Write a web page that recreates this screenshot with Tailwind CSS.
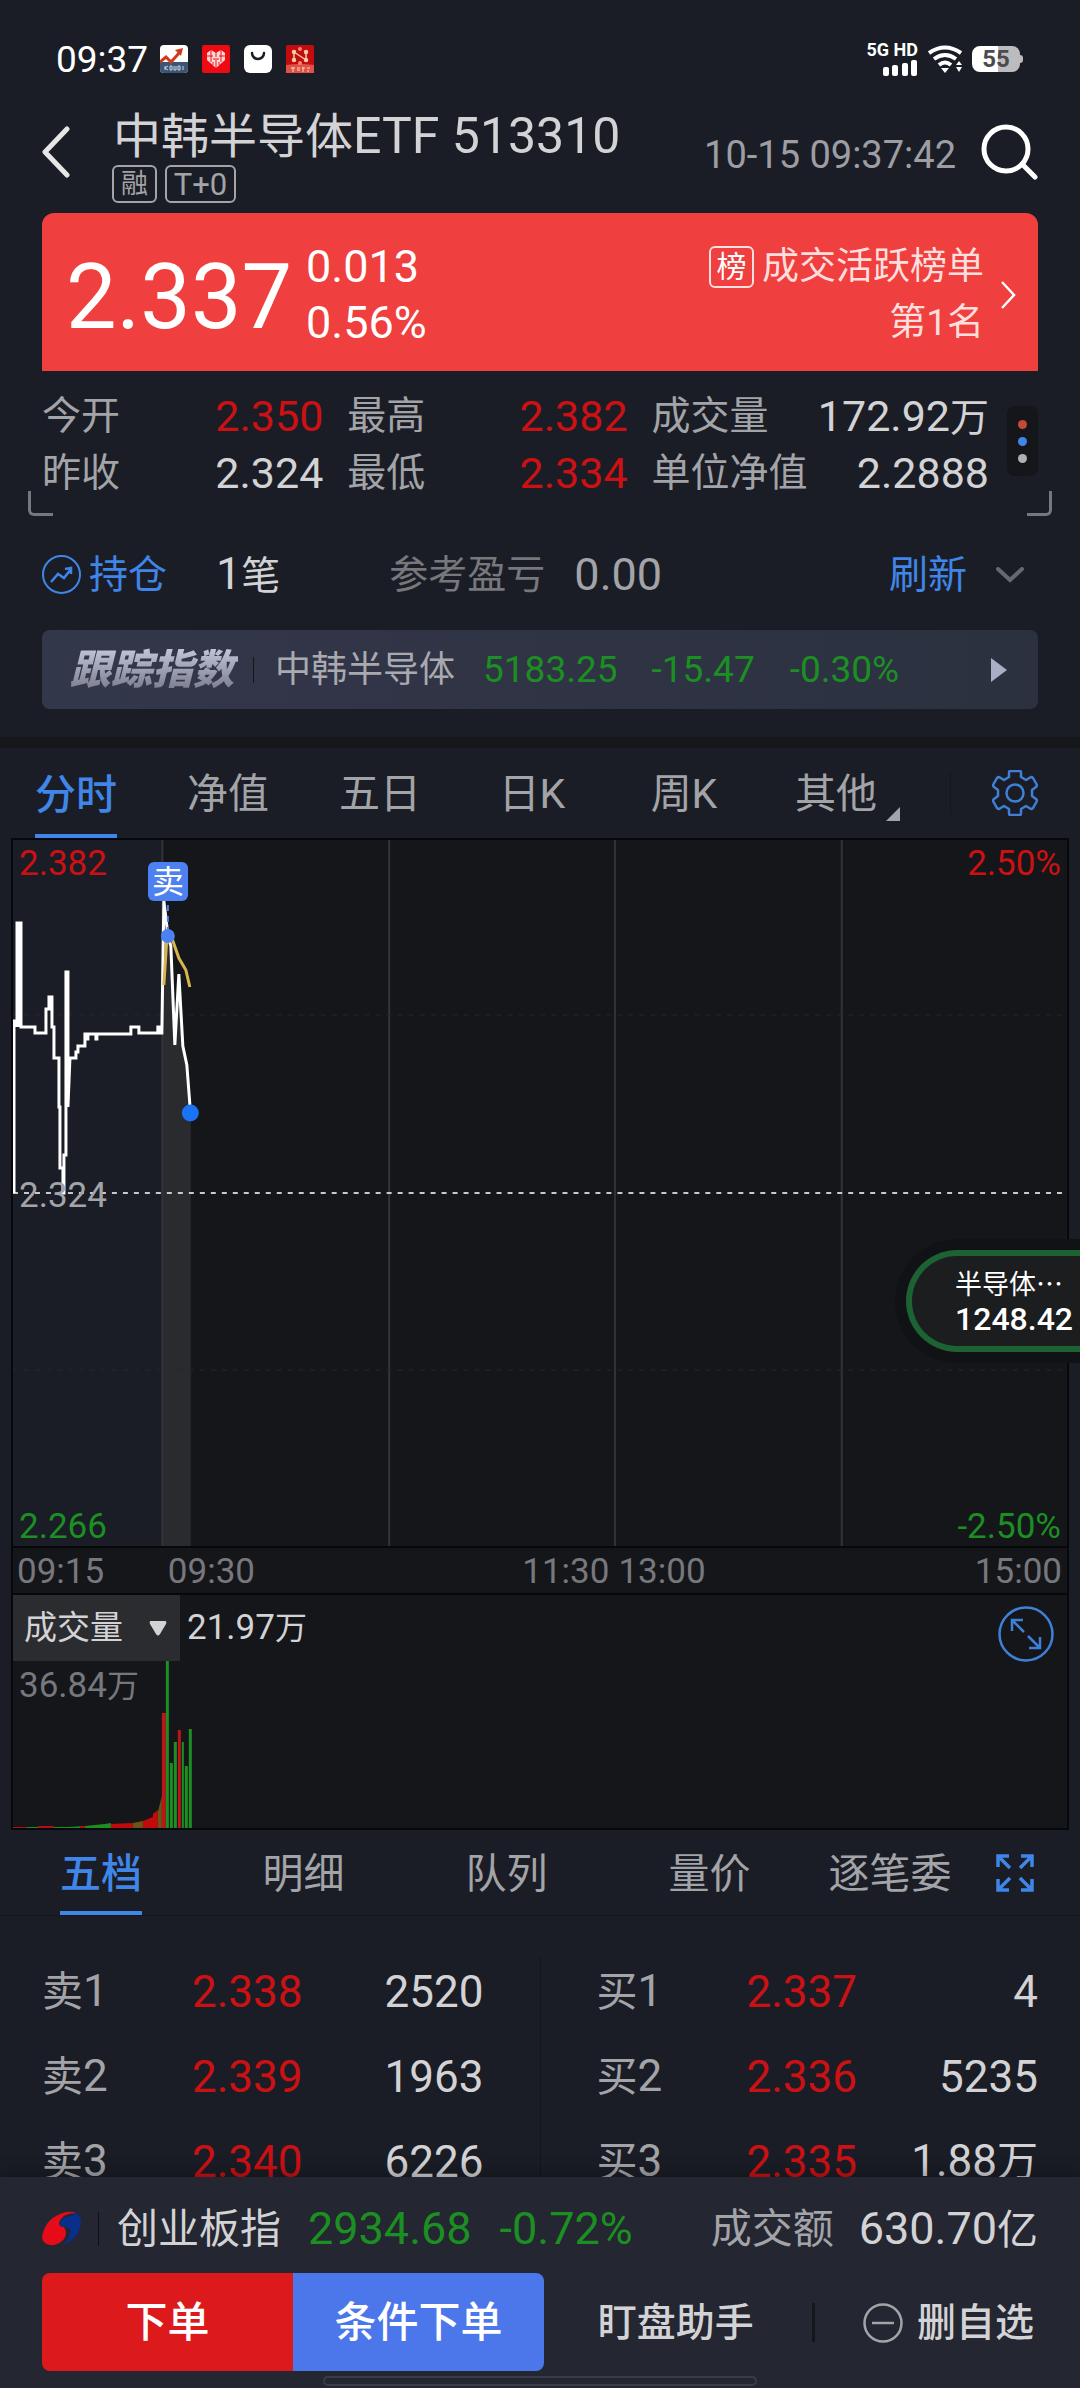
<!DOCTYPE html>
<html lang="zh-CN">
<head>
<meta charset="utf-8">
<meta name="viewport" content="width=device-width, initial-scale=1">
<title>中韩半导体ETF 513310</title>
<script src="https://cdn.jsdelivr.net/npm/@tailwindcss/browser@4"></script>
</head>
<body class="bg-[#1b1d26] font-['Roboto','Noto_Sans_CJK_SC',sans-serif] text-[#d3d3d5]">
<div class="relative flex h-screen flex-col overflow-hidden">

  <!-- Status bar -->
  <div class="flex h-[108px] shrink-0 items-center pt-[10px] pr-[57px] pl-[56px]">
    <span class="text-[37px] leading-none text-white">09:37</span>
    <div class="ml-[12px] flex gap-[14px]">
      <svg class="size-7" viewBox="0 0 28 28"><rect width="28" height="28" rx="4" fill="#fff"/><path d="M0 17h28v7a4 4 0 0 1-4 4H4a4 4 0 0 1-4-4z" fill="#3a5575"/><path d="M0 17l6-5 5 5 9-10" fill="none" stroke="#d03a1c" stroke-width="3"/><path d="M15 5l8-2-2 8z" fill="#d03a1c"/><path d="M5 21v4M5 23l3-2M5 23l3 2M10 21h2v4h-2zM14 21v4h2v-4M18 25v-4h2v4zM23 21v4" fill="none" stroke="#cdd6e0" stroke-width="1"/></svg>
      <svg class="size-7" viewBox="0 0 28 28"><rect width="28" height="28" rx="2" fill="#ee0a12"/><path d="M14 23L5 15V8l4-3 5 3 5-3 4 3v7z" fill="#ffd9d9"/><path d="M9 5v12M14 8v4M19 5v12M5 11h6M17 11h6M11 14h6M11 17v3M17 17v3M14 15v8" stroke="#ee0a12" stroke-width="1" fill="none"/></svg>
      <svg class="size-7" viewBox="0 0 28 28"><rect width="28" height="28" rx="6" fill="#fff"/><path d="M8 8a6 6 0 0 0 12 0" fill="none" stroke="#1b1d26" stroke-width="2.5" stroke-linecap="round"/></svg>
      <svg class="size-7" viewBox="0 0 28 28"><rect width="28" height="28" rx="2" fill="#c20c10"/><path d="M0 20q14-2 28 0v8H0z" fill="#e05248"/><g stroke="#f5c9a0" stroke-width="1.5" fill="#f5c9a0"><path d="M8 8v7M8 7l12 8M20 7v8" fill="none"/><circle cx="8" cy="7" r="1.5"/><circle cx="8" cy="15" r="1.5"/><circle cx="20" cy="7" r="1.5"/><circle cx="20" cy="15" r="1.5"/></g><circle cx="14" cy="4" r="2" fill="#f08a70"/><circle cx="14" cy="18" r="2" fill="#f08a70"/><path d="M5 23h4M7 22v5M11 23h3M11 25h3M16 23h3M17 22v5M21 23h3M22 25v2" stroke="#f7d9b0" stroke-width="1" fill="none"/></svg>
    </div>
    <div class="ml-auto flex items-center gap-[10px]">
      <div class="flex flex-col items-end gap-[3px] text-[18px] leading-[15px] font-bold text-white">
        <span>5G HD</span>
        <svg class="h-4 w-[36px]" viewBox="0 0 36 16" fill="#fff"><rect x="1" y="7" width="6" height="9" rx="2"/><rect x="10" y="5" width="6" height="11" rx="2"/><rect x="20" y="3" width="6" height="13" rx="2"/><rect x="29" y="0" width="6" height="16" rx="2"/></svg>
      </div>
      <svg class="h-7 w-[34px]" viewBox="0 0 34 28" fill="none" stroke="#fff" stroke-width="4"><path d="M1 8Q17-3 33 8"/><path d="M6 14Q17 6 28 14"/><path d="M11 20Q17 15 23 20"/><path d="M13 23h8l-4 5z" fill="#fff" stroke="none"/><path d="M28 20l3-4 3 4zM28 22l3 5 3-5z" fill="#fff" stroke="none"/></svg>
      <div class="flex items-center">
        <div class="flex h-[26px] w-[48px] items-center justify-center rounded-lg bg-linear-to-r from-white from-55% to-[#bcbcbe] to-55% text-2xl leading-none font-bold text-[#4b4b4d]">55</div>
        <span class="h-2 w-[3px] rounded-r-sm bg-[#bcbcbe]"></span>
      </div>
    </div>
  </div>

  <!-- Title bar -->
  <header class="flex h-[105px] shrink-0 items-start px-[42px]">
    <button aria-label="返回" class="mt-[18px]"><svg class="h-[52px] w-7" viewBox="0 0 28 52" fill="none" stroke="#e6e6e6" stroke-width="5" stroke-linecap="round" stroke-linejoin="round"><path d="M25 3L3 26l22 23"/></svg></button>
    <div class="ml-[42px]">
      <h1 class="pl-px text-[48px] leading-[57px] whitespace-nowrap">中韩半导体<span class="text-[50px]">ETF 513310</span></h1>
      <div class="flex gap-2 text-[#a3a4a8]">
        <span class="flex h-[38px] w-[45px] items-center justify-center rounded-md border-2 text-[27px] leading-none">融</span>
        <span class="flex h-[38px] w-[71px] items-center justify-center rounded-md border-2 text-[31px] leading-none">T+0</span>
      </div>
    </div>
    <time class="mt-[27px] ml-auto text-[38px] leading-[40px] text-[#9d9ea3]">10-15 09:37:42</time>
    <button aria-label="搜索" class="mt-[14px] ml-6"><svg class="size-[58px]" viewBox="0 0 58 58" fill="none" stroke="#fff" stroke-width="5" stroke-linecap="round"><circle cx="26" cy="27" r="22"/><path d="M43 43l12 12"/></svg></button>
  </header>

  <!-- Price card -->
  <section class="mx-[42px] flex h-[158px] shrink-0 items-center rounded-t-xl bg-[#ef3f3e] pt-[6px] pr-[22px] pl-6 text-white">
    <span class="pt-[6px] text-[90px] leading-none">2.337</span>
    <div class="ml-[14px] text-[45px] leading-[56px]"><p>0.013</p><p>0.56%</p></div>
    <a href="#rank" class="ml-auto flex items-center gap-4 text-right text-[37px] leading-[56px] text-[#ffdedd]">
      <span>
        <span class="flex items-center gap-2"><span class="flex h-[42px] w-[45px] items-center justify-center rounded-md border-2 border-[#ffdedd] text-[30px] leading-none text-white">榜</span>成交活跃榜单</span>
        <span class="block">第1名</span>
      </span>
      <svg class="h-[30px] w-4" viewBox="0 0 16 30" fill="none" stroke="#fff" stroke-width="2.5"><path d="M2 2l12 13L2 28"/></svg>
    </a>
  </section>

  <!-- Key figures -->
  <section class="relative flex h-[149px] shrink-0 items-start px-[42px] pt-[18px]">
    <dl class="grid flex-1 grid-cols-[281fr_280fr_337fr] gap-x-6 text-[43px] leading-[55px]">
      <div class="flex justify-between"><dt class="text-[39px] text-[#a3a4a8]">今开</dt><dd class="text-[#cc1114]">2.350</dd></div>
      <div class="flex justify-between"><dt class="text-[39px] text-[#a3a4a8]">最高</dt><dd class="text-[#cc1114]">2.382</dd></div>
      <div class="flex justify-between"><dt class="text-[39px] text-[#a3a4a8]">成交量</dt><dd>172.92<span class="text-[39px]">万</span></dd></div>
      <div class="flex justify-between"><dt class="text-[39px] text-[#a3a4a8]">昨收</dt><dd>2.324</dd></div>
      <div class="flex justify-between"><dt class="text-[39px] text-[#a3a4a8]">最低</dt><dd class="text-[#cc1114]">2.334</dd></div>
      <div class="flex justify-between"><dt class="text-[39px] text-[#a3a4a8]">单位净值</dt><dd>2.2888</dd></div>
    </dl>
    <button aria-label="更多指标" class="mt-[17px] ml-[18px] flex h-[70px] w-[31px] flex-col items-center justify-center gap-2 rounded-lg bg-[#15161a]">
      <span class="size-[9px] rounded-full bg-[#c44a36]"></span><span class="size-[9px] rounded-full bg-[#3f86e8]"></span><span class="size-[9px] rounded-full bg-[#b0b0b2]"></span>
    </button>
    <span class="absolute bottom-1 left-[28px] size-[25px] rounded-bl-md border-b-3 border-l-3 border-[#77787d]"></span>
    <span class="absolute right-[28px] bottom-1 size-[25px] rounded-br-md border-r-3 border-b-3 border-[#77787d]"></span>
  </section>

  <!-- Holdings -->
  <section class="flex h-[109px] shrink-0 items-center pr-[56px] pl-[42px] text-[39px] leading-[56px]">
    <a href="#position" class="flex items-center gap-2 text-[#3f86e8]">
      <svg class="size-[39px]" viewBox="0 0 39 39" fill="none" stroke="#3f86e8" stroke-width="2"><circle cx="19.500" cy="19.500" r="18.500"/><path d="M9 27l7-8 6 4 7-9M23 14l6-1v6" stroke-width="2.500"/></svg>持仓</a>
    <span class="ml-[49px]"><span class="text-[45px]">1</span>笔</span>
    <span class="ml-[109px] text-[#77787d]">参考盈亏</span>
    <span class="ml-[29px] text-[45px] text-[#a3a4a8]">0.00</span>
    <button class="ml-auto text-[#3f86e8]">刷新</button>
    <button aria-label="展开" class="ml-[29px]"><svg class="h-4 w-7" viewBox="0 0 28 16" fill="none" stroke="#67686d" stroke-width="4" stroke-linecap="round"><path d="M2 2l12 11L26 2"/></svg></button>
  </section>

  <!-- Tracked index -->
  <a href="#index" class="mx-[42px] mt-px flex h-[79px] shrink-0 items-center rounded-lg bg-linear-to-r from-[#33374a] to-[#2c3140] pr-[31px] pl-[28px] text-[37px] leading-none text-[#1c8f22]">
    <span class="bg-linear-to-b from-[#c5c7dc] to-[#77798a] bg-clip-text pr-1 text-[41px] leading-[46px] font-black text-transparent italic">跟踪指数</span>
    <span class="ml-[15px] h-[26px] w-px bg-[#15161a]"></span>
    <span class="ml-[21px] text-[36px] text-[#a9aaaf]">中韩半导体</span>
    <span class="ml-[28px]">5183.25</span>
    <span class="ml-[34px]">-15.47</span>
    <span class="ml-[35px]">-0.30%</span>
    <svg class="ml-auto h-[26px] w-[17px]" viewBox="0 0 17 26" fill="#a9afc4"><path d="M1 1l16 12L1 25z"/></svg>
  </a>
  <div class="mt-7 h-[11px] shrink-0 bg-[#15171b]"></div>

  <!-- Chart tabs -->
  <nav class="flex h-[90px] shrink-0 items-stretch pr-[42px] text-[41px] leading-[46px] text-[#a3a4a8]">
    <div class="grid flex-1 grid-cols-6 pr-1">
      <button class="flex justify-center font-medium text-[#3f86e8]"><span class="h-full border-b-4 border-[#3f86e8] pt-[24px]">分时</span></button>
      <button class="pt-[2px]">净值</button>
      <button class="pt-[2px]">五日</button>
      <button class="pt-[2px]">日K</button>
      <button class="pt-[2px]">周K</button>
      <button class="relative pt-[2px]">其他<svg class="absolute right-[12px] bottom-[17px] size-[14px]" viewBox="0 0 14 14" fill="#a3a4a8"><path d="M14 0v14H0z"/></svg></button>
    </div>
    <span class="ml-[34px] h-[42px] w-px self-center bg-[#15161a]"></span>
    <button aria-label="设置" class="ml-[41px]"><svg class="size-[46px]" viewBox="0 0 46 46" fill="none" stroke="#3f7fd6" stroke-width="2.500" stroke-linejoin="round"><circle cx="23" cy="23" r="8.500"/><path d="M18 1h10q1 0 1 2v4l5 3 5-3q1 0 2 1l4 7q0 1-1 2l-4 3v6l4 3q1 1 1 2l-4 7q-1 1-2 1l-5-3-5 3v4q0 2-1 2H18q-1 0-1-2v-4l-5-3-5 3q-1 0-2-1l-4-7q0-1 1-2l4-3v-6l-4-3q-1-1-1-2l4-7q1-1 2-1l5 3 5-3V3q0-2 1-2z"/></svg></button>
  </nav>

  <!-- Intraday chart -->
  <section class="relative mr-[11px] ml-[11px] shrink-0 border-2 border-[#07080b] bg-[#15161a] text-[35px] leading-[40px]">
    <div class="relative h-[706px]">
      <svg class="absolute inset-0 size-full" viewBox="13 839 1055 706" preserveAspectRatio="none" fill="none">
        <rect x="13" y="839" width="149" height="706" fill="#1b1d26"/>
        <path d="M163 1545V900l4 25 4 20 4 99 4-71 4 72 4 19 4 48v433z" fill="#2a2b2f"/>
        <path d="M162.500 839v706M389.500 839v706M615.500 839v706M842.500 839v706" stroke="#33343b" stroke-width="2"/>
        <path d="M13 1014h1055M13 1369h1055" stroke="#24262b" stroke-dasharray="5 6"/>
        <path d="M13 1192h1055" stroke="#c9c9cb" stroke-width="2" stroke-dasharray="5 6"/>
        <path d="M17 1026V922h4v104z" fill="#fff"/>
        <path d="M14 1192V1020h3v6V922h4v104h14v6h11v-24h3v-12h3v30h2v31h5v49h1v61h3v25h1v-38h2V971h2v135l2-49h6v-6h2v-6h7v-12h2v5h1v-5h8v5h1v-5h34v-7h8v6h19v-6h3v6h1l2-132 3 25 1 10 3 10 4 99 4-71 4 72 4 19 3 39v9" stroke="#fff" stroke-width="3"/>
        <path d="M164 984l3-47h5l7 20 7 12 4 17" stroke="#d9b54e" stroke-width="3"/>
        <path d="M168 904v24" stroke="#4d80f0" stroke-width="2" stroke-dasharray="6 5"/>
        <circle cx="168" cy="935" r="7" fill="#4d80f0"/><circle cx="190.500" cy="1112" r="8.500" fill="#1a72f5"/>
      </svg>
      <span class="absolute top-[22px] left-[135px] flex h-[39px] w-[40px] items-center justify-center rounded-md bg-[#4d80f0] text-[32px] leading-none text-white">卖</span>
      <span class="absolute top-1 left-[6px] text-[#cc1114]">2.382</span>
      <span class="absolute top-1 right-[6px] text-[#cc1114]">2.50%</span>
      <span class="absolute top-[336px] left-[6px] text-[#a3a4a8]">2.324</span>
      <span class="absolute -bottom-px left-[6px] text-[#1c8f22]">2.266</span>
      <span class="absolute right-[6px] -bottom-px text-[#1c8f22]">-2.50%</span>
    </div>
    <div class="grid h-[49px] grid-cols-[148fr_454fr_453fr] items-center border-y-2 border-[#07080b] pt-[3px] text-[#77787d]">
      <span class="pl-1">09:15</span>
      <span class="flex justify-between pr-[5px] pl-[7px]"><span>09:30</span><span>11:30</span></span>
      <span class="flex justify-between pr-[5px] pl-[4px]"><span>13:00</span><span>15:00</span></span>
    </div>
    <div class="relative h-[233px]">
      <svg class="absolute inset-0 size-full" viewBox="13 1594 1055 233" preserveAspectRatio="none">
        <path d="M13 1827v-1h55l17-1 20-2 6-1v5z" fill="#1c8f22"/><path d="M13 1826h14v1H13zM38 1825h16v2H38zM80 1825h5v2h-5z" fill="#b01012"/>
        <path d="M111 1827v-4l22-1v5zM143 1827v-7l10-4v-3l5-4v18z" fill="#c00a0c"/>
        <path d="M133 1827v-5l10-2v7zM158 1827v-16l4-16v32z" fill="#6b5516"/>
        <path d="M162 1712h4v115h-4zM178 1729h3v98h-3z" fill="#bd1517"/>
        <path d="M166 1660h3v167h-3zM170 1762h3v65h-3zM174 1741h3v86h-3zM182 1741h2v86h-2zM185 1765h3v62h-3zM189 1728h3v99h-3z" fill="#1c8f22"/>
      </svg>
      <div class="relative flex h-[66px] items-center">
        <label class="relative flex h-full w-[167px] items-center bg-[#2b2c30]">
          <select aria-label="指标" class="size-full appearance-none pl-[11px] text-[33px] leading-[40px] outline-none"><option>成交量</option></select>
          <svg class="pointer-events-none absolute right-[13px] h-[15px] w-[18px]" viewBox="0 0 18 15" fill="#d3d3d5"><path d="M2 0h14q2 0 1 3l-6 10q-2 3-4 0L1 3Q0 0 2 0z"/></svg>
        </label>
        <span class="ml-[7px] text-[#d3d3d5]">21.97<span class="text-[32px]">万</span></span>
        <button aria-label="放大" class="mt-3 mr-[13px] ml-auto"><svg class="size-[56px]" viewBox="0 0 56 56" fill="none" stroke="#3f7fd6" stroke-width="2.500"><circle cx="28" cy="28" r="26.500"/><path d="M26 26L14 14M14 25V14h11M30 30l12 12M42 31v11H31"/></svg></button>
      </div>
      <span class="relative block pt-[5px] pl-[6px] text-[#77787d]">36.84<span class="text-[32px]">万</span></span>
    </div>
  </section>

  <!-- Floating index ball -->
  <a href="#float" class="absolute top-[1239px] right-0 h-[124px] w-[185px] rounded-l-full bg-[#101215] py-[11px] pl-[11px]">
    <span class="block size-full rounded-l-full border-6 border-r-0 border-[#1d6232] bg-[#1b1d1f] pt-[10px] pl-[43px] whitespace-nowrap text-white">
      <span class="block text-[27px] leading-[34px]">半导体<span class="font-['Noto_Sans_CJK_SC']">⋯</span></span>
      <span class="block text-[32px] leading-[34px] font-medium">1248.42</span>
    </span>
  </a>

  <!-- Order book tabs -->
  <nav class="flex h-[86px] shrink-0 items-stretch border-b border-[#15161a] text-[41px] leading-[46px] text-[#a3a4a8]">
    <div class="flex w-[950px] overflow-hidden whitespace-nowrap">
      <button class="flex w-[202px] shrink-0 justify-center font-medium text-[#3f86e8]"><span class="h-full border-b-4 border-[#3f86e8] pt-[21px]">五档</span></button>
      <button class="w-[203px] shrink-0 pt-[2px]">明细</button>
      <button class="w-[203px] shrink-0 pt-[2px]">队列</button>
      <button class="w-[203px] shrink-0 pt-[2px]">量价</button>
      <button class="w-[199px] shrink-0 pt-[2px]">逐笔委托</button>
    </div>
    <button aria-label="全屏" class="ml-[46px]"><svg class="size-[38px]" viewBox="0 0 38 38" fill="none" stroke="#3f86e8" stroke-width="3.500"><path d="M2 13V2h11M2 2l12 12M25 2h11v11M36 2L24 14M2 25v11h11M2 36l12-12M36 25v11H25M36 36L24 24"/></svg></button>
  </nav>

  <!-- Order book -->
  <section class="flex min-h-0 flex-1 items-start overflow-hidden px-[42px] pt-[33px] text-[44px] leading-[50px]">
    <table class="flex-1 table-fixed">
      <tbody>
        <tr class="h-[85px]"><th scope="row" class="w-[25%] text-left font-normal text-[#a3a4a8]"><span class="text-[41px]">卖</span>1</th><td class="w-[34%] text-right text-[#cc1114]">2.338</td><td class="text-right">2520</td></tr>
        <tr class="h-[85px]"><th scope="row" class="text-left font-normal text-[#a3a4a8]"><span class="text-[41px]">卖</span>2</th><td class="text-right text-[#cc1114]">2.339</td><td class="text-right">1963</td></tr>
        <tr class="h-[85px]"><th scope="row" class="text-left font-normal text-[#a3a4a8]"><span class="text-[41px]">卖</span>3</th><td class="text-right text-[#cc1114]">2.340</td><td class="text-right">6226</td></tr>
      </tbody>
    </table>
    <div class="mt-[7px] mr-[56px] ml-[56px] h-[300px] w-px bg-[#15161a]"></div>
    <table class="flex-1 table-fixed">
      <tbody>
        <tr class="h-[85px]"><th scope="row" class="w-[25%] text-left font-normal text-[#a3a4a8]"><span class="text-[41px]">买</span>1</th><td class="w-[34%] text-right text-[#cc1114]">2.337</td><td class="text-right">4</td></tr>
        <tr class="h-[85px]"><th scope="row" class="text-left font-normal text-[#a3a4a8]"><span class="text-[41px]">买</span>2</th><td class="text-right text-[#cc1114]">2.336</td><td class="text-right">5235</td></tr>
        <tr class="h-[85px]"><th scope="row" class="text-left font-normal text-[#a3a4a8]"><span class="text-[41px]">买</span>3</th><td class="text-right text-[#cc1114]">2.335</td><td class="text-right">1.88<span class="text-[41px]">万</span></td></tr>
      </tbody>
    </table>
  </section>

  <!-- Bottom bar -->
  <footer class="relative flex h-[211px] shrink-0 flex-col bg-[#242631] px-[42px] shadow-[0_-4px_16px_#0000004d]">
    <a href="#chinext" class="flex h-24 items-center pt-[8px] text-[41px] leading-[50px]">
      <svg class="h-9 w-[39px]" viewBox="0 0 39 36"><path d="M28 1q11 0 11 9 0 16-18 24 8-9 7-15-2-4-8-3-4-1-2-5 4-7 14-6z" fill="#0a2f8a"/><path d="M34 2Q20 2 17 12q0 4 5 4 4 6 0 12-6 7-14 6-8-1-8-9Q4 6 24 1q6-1 10 1z" fill="#e60b18"/></svg>
      <span class="ml-[17px] h-[34px] w-px bg-[#0f1014]"></span>
      <span class="ml-[18px]">创业板指</span>
      <span class="ml-[27px] text-[45px] text-[#1c8f22]">2934.68</span>
      <span class="ml-[28px] text-[45px] text-[#1c8f22]">-0.72%</span>
      <span class="ml-auto text-[#a3a4a8]">成交额</span>
      <span class="ml-[25px] text-[45px]">630.70<span class="text-[41px]">亿</span></span>
    </a>
    <div class="flex h-[98px] items-center text-[42px] leading-[50px] font-medium text-white">
      <button class="h-full flex-[253] rounded-l-lg bg-[#dc1a1b] pt-[2px]">下单</button>
      <button class="h-full flex-[253] rounded-r-lg bg-[#4b77ea] pt-[2px]">条件下单</button>
      <button class="flex-[266] pt-[2px] pr-1 text-[39px] text-[#d3d3d5]">盯盘助手</button>
      <span class="h-[39px] w-[3px] bg-[#15161a]"></span>
      <button class="flex flex-[221] items-center justify-end gap-[14px] pt-[2px] pr-1 text-[39px] text-[#d3d3d5]">
        <svg class="size-[40px]" viewBox="0 0 40 40" fill="none" stroke="#a3a4a8" stroke-width="2.500"><circle cx="20" cy="20" r="18.500"/><path d="M9 20h22"/></svg>删自选</button>
    </div>
    <div class="mx-auto mt-[5px] h-[10px] w-[434px] shrink-0 rounded-full border-2 border-[#3a3c48]"></div>
  </footer>
</div>
</body>
</html>
